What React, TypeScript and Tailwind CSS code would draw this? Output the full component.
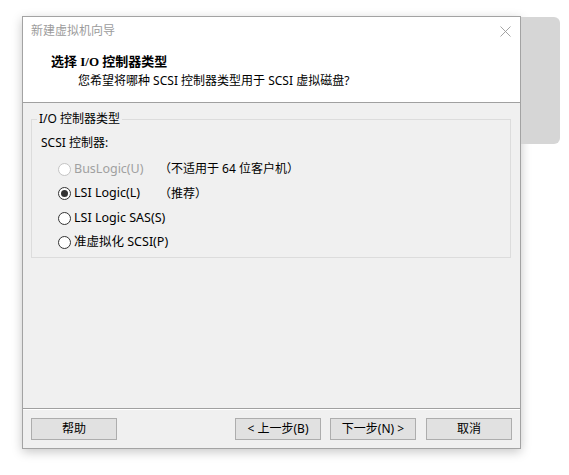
const uiFont = "font-['Noto_Sans','Noto_Sans_CJK_SC',sans-serif]";

function Radio({ checked, disabled }: { checked?: boolean; disabled?: boolean }) {
  return (
    <span
      className={`flex h-[13px] w-[13px] shrink-0 items-center justify-center rounded-full border bg-white ${
        disabled ? "border-[#c4c4c4]" : "border-[#333333]"
      }`}
    >
      {checked && <span className="h-[7px] w-[7px] rounded-full bg-[#333333]" />}
    </span>
  );
}

const options = [
  { label: "BusLogic(U)", note: "（不适用于 64 位客户机）", disabled: true },
  { label: "LSI Logic(L)", note: "（推荐）", checked: true },
  { label: "LSI Logic SAS(S)" },
  { label: "准虚拟化 SCSI(P)" },
];

function Button({ children, className = "" }: { children: React.ReactNode; className?: string }) {
  return (
    <button
      className={`flex h-[22px] w-[86px] items-center justify-center border border-[#adadad] bg-[#e1e1e1] text-[12px] text-black ${className}`}
    >
      {children}
    </button>
  );
}

export default function App() {
  return (
    <div className={`flex min-h-[475px] w-[569px] items-start bg-white pl-[22px] pt-[16px] ${uiFont}`}>
      <div className="flex h-[433px] w-[499px] flex-col border border-[#a3a3a3] bg-[#f0f0f0] shadow-[0_3px_10px_rgba(0,0,0,0.22)]">
        {/* header */}
        <div className="relative h-[86px] border-b border-[#a0a0a0] bg-white">
          <p className="pl-[8px] pt-[6px] text-[12px] leading-[16px] text-[#9c9c9c]">新建虚拟机向导</p>
          <svg
            className="absolute right-[9px] top-[9px]"
            width="11"
            height="11"
            viewBox="0 0 11 11"
            fill="none"
            stroke="#9a9a9a"
            strokeWidth="0.9"
          >
            <path d="M0.5 0.5 L10.5 10.5 M10.5 0.5 L0.5 10.5" />
          </svg>
          <p className="mt-[15px] pl-[28px] font-['Liberation_Serif','Noto_Sans_CJK_SC',serif] text-[13px] font-bold leading-[16px] text-black">
            选择 I/O 控制器类型
          </p>
          <p className="mt-[3px] pl-[55px] text-[12px] leading-[16px] text-black">
            您希望将哪种 SCSI 控制器类型用于 SCSI 虚拟磁盘?
          </p>
        </div>

        {/* content */}
        <div className="flex-1 pl-[8px] pr-[9px] pt-[8px]">
          <fieldset className="border border-[#dcdcdc] pb-[2px] pl-[9px]">
            <legend className="-ml-[4px] px-[2px] text-[12px] leading-[16px] text-black">I/O 控制器类型</legend>
            <p className="mt-[8px] text-[12px] leading-[16px] text-black">SCSI 控制器:</p>
            <div className="mt-[6px] flex flex-col">
              {options.map((o) => (
                <div key={o.label} className="ml-[17px] flex h-[24.5px] items-center whitespace-nowrap text-[12.5px]">
                  <div className="flex w-[101px] shrink-0 items-center gap-[3px]">
                    <Radio checked={o.checked} disabled={o.disabled} />
                    <span className={o.disabled ? "text-[#a0a0a0]" : "text-black"}>{o.label}</span>
                  </div>
                  {o.note && <span className="text-[12px] text-black">{o.note}</span>}
                </div>
              ))}
            </div>
          </fieldset>
        </div>

        {/* footer */}
        <div className="flex h-[40px] items-start border-t border-[#a0a0a0] px-[8px] pt-[9px] shadow-[inset_0_1px_0_#ffffff]">
          <Button>帮助</Button>
          <Button className="ml-auto">&lt; 上一步(B)</Button>
          <Button className="ml-[9px]">下一步(N) &gt;</Button>
          <Button className="ml-[10px]">取消</Button>
        </div>
      </div>
      <div className="mt-[1px] h-[127px] w-[39px] rounded-r-[6px] bg-[#d6d6d6]" />
    </div>
  );
}
